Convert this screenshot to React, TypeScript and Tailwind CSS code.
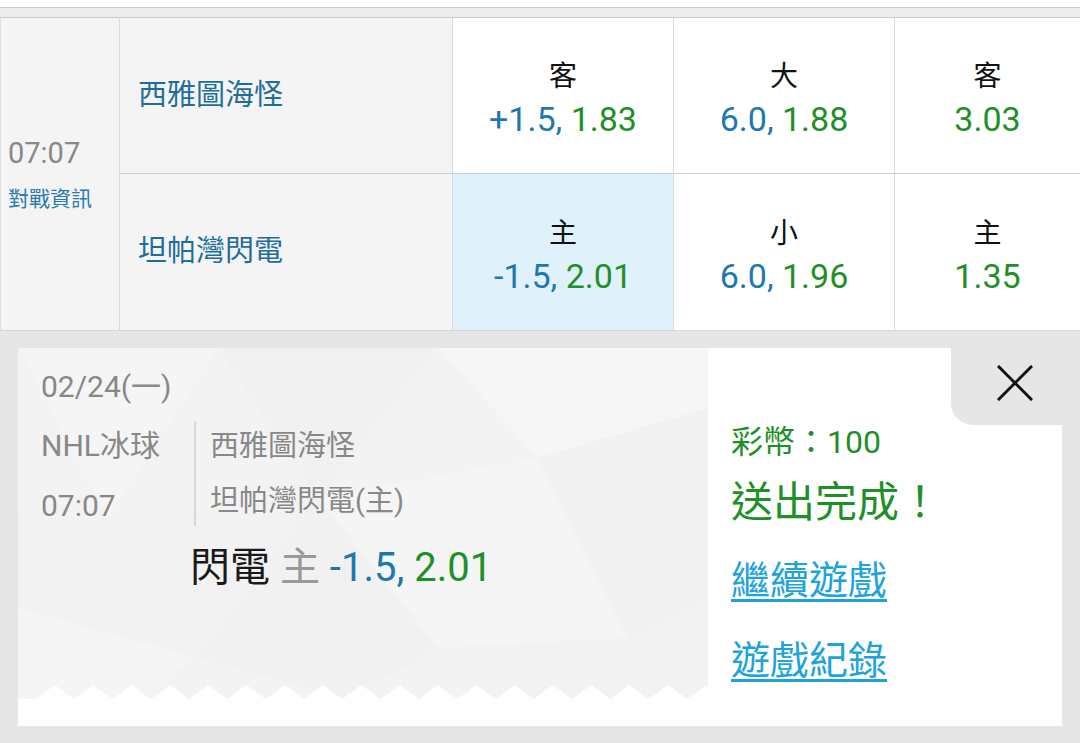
import React from "react";

const font = "font-['Roboto','Noto_Sans_CJK_TC',sans-serif]";

type Odd = { label: string; a?: string; b: string; selected?: boolean };

function OddCell({ label, a, b, selected, last }: Odd & { last?: boolean }) {
  return (
    <div
      className={
        "flex flex-col items-center justify-center pt-[7px] " +
        (last ? "flex-1 " : "w-[221px] shrink-0 border-r border-[#d5dade] ") +
        (selected ? "bg-[#dff2fb]" : "bg-white")
      }
    >
      <div className="text-[28px] leading-[36px] text-[#111]">{label}</div>
      <div className="text-[34px] leading-[40px] mt-[4px]">
        {a && <span className="text-[#1f78ad]">{a}, </span>}
        <span className="text-[#1f8f28]">{b}</span>
      </div>
    </div>
  );
}

function TeamRow({ team, odds, border }: { team: string; odds: Odd[]; border?: boolean }) {
  return (
    <div className={"flex h-[156px] " + (border ? "border-b border-[#c9d1d8]" : "h-[155px]")}>
      <div className="w-[333px] shrink-0 bg-[#f4f4f4] border-r border-[#d9dcdf] flex items-center pl-[18px] text-[29px] text-[#1d6e98]">
        {team}
      </div>
      {odds.map((o, i) => (
        <OddCell key={i} {...o} last={i === odds.length - 1} />
      ))}
    </div>
  );
}

function Pattern() {
  return (
    <svg className="absolute inset-0" width="690" height="378" viewBox="0 0 690 378">
      <rect x="0" y="0" width="690" height="378" fill="#f3f3f3" />
      <polygon points="0,0 200,0 90,170" fill="#f5f5f5" />
      <polygon points="200,0 420,0 300,150" fill="#f1f1f1" />
      <polygon points="420,0 690,0 690,60 520,110" fill="#f6f6f6" />
      <polygon points="520,110 690,60 690,250 610,290" fill="#f1f1f1" />
      <polygon points="0,170 90,170 300,150 180,310 0,260" fill="#f2f2f2" />
      <polygon points="300,150 520,110 610,290 420,300" fill="#f5f5f5" />
      <polygon points="180,310 300,150 420,300 330,351" fill="#f1f1f1" />
      <polygon points="0,260 180,310 110,351 0,351" fill="#f5f5f5" />
      <polygon points="420,300 610,290 690,250 690,351 480,351" fill="#f2f2f2" />
      <path
        d={
          "M0,351 " +
          Array.from({ length: 19 })
            .map((_, k) => {
              const p = 37 + k * 38.3;
              return `L${p - 19},351 L${p},337 L${p + 19},351`;
            })
            .join(" ") +
          " L690,351 L690,378 L0,378 Z"
        }
        fill="#ffffff"
      />
    </svg>
  );
}

export default function App() {
  return (
    <div className={"w-[1080px] h-[743px] overflow-hidden bg-white " + font}>
      <div className="h-[7px] bg-white" />
      <div className="h-[11px] bg-[#ebecee] border-y border-[#c5cbd0]" />

      <div className="flex border-b border-[#d3d7db]">
        <div className="w-[120px] shrink-0 bg-[#f4f4f4] border-l border-r border-l-[#e0e0e0] border-r-[#d9dcdf] flex flex-col justify-center pl-[7px]">
          <div className="text-[29px] leading-[34px] text-[#888]">07:07</div>
          <div className="text-[21px] leading-[28px] mt-[15px] text-[#2a7bb0]">對戰資訊</div>
        </div>
        <div className="flex-1 flex flex-col">
          <TeamRow
            border
            team="西雅圖海怪"
            odds={[
              { label: "客", a: "+1.5", b: "1.83" },
              { label: "大", a: "6.0", b: "1.88" },
              { label: "客", b: "3.03" },
            ]}
          />
          <TeamRow
            team="坦帕灣閃電"
            odds={[
              { label: "主", a: "-1.5", b: "2.01", selected: true },
              { label: "小", a: "6.0", b: "1.96" },
              { label: "主", b: "1.35" },
            ]}
          />
        </div>
      </div>

      <div className="bg-[#e6e6e6] px-[18px] pt-[17px] pb-[18px]">
        <div className="h-[378px] bg-white flex">
          <div className="relative w-[690px] shrink-0">
            <Pattern />
            <div className="relative pl-[23px] pt-[19px] text-[#888]">
              <div className="text-[30px] leading-[40px]">02/24(一)</div>
              <div className="flex mt-[14px] text-[30px]">
                <div className="w-[153px] shrink-0">
                  <div className="leading-[50px]">NHL冰球</div>
                  <div className="leading-[40px] mt-[15px]">07:07</div>
                </div>
                <div className="border-l-2 border-[#d8d8d8] pl-[14px] text-[29px]">
                  <div className="leading-[50px]">西雅圖海怪</div>
                  <div className="leading-[40px] mt-[10px]">坦帕灣閃電(主)</div>
                </div>
              </div>
              <div className="ml-[149px] mt-[17px] text-[40px] leading-[50px]">
                <span className="text-[#1a1a1a]">閃電 </span>
                <span className="text-[#999]">主 </span>
                <span className="text-[#1f78ad]">-1.5, </span>
                <span className="text-[#1f8f28]">2.01</span>
              </div>
            </div>
          </div>

          <div className="relative flex-1 pl-[23px] pt-[74px]">
            <div className="absolute top-0 right-0 w-[111px] h-[77px] bg-[#e6e6e6] rounded-bl-[22px] flex items-start justify-end pr-[29px] pt-[17px]">
              <svg width="36" height="36" viewBox="0 0 36 36">
                <path d="M1 1 L35 35 M35 1 L1 35" stroke="#111" strokeWidth="3" fill="none" />
              </svg>
            </div>
            <div className="text-[32px] leading-[40px] text-[#1f8f28]">彩幣：100</div>
            <div className="text-[42px] leading-[50px] mt-[16px] text-[#1f8f28]">送出完成！</div>
            <div className="text-[39px] leading-[50px] mt-[28px] text-[#1ea3dd] underline decoration-[3px] underline-offset-[5px]">
              繼續遊戲
            </div>
            <div className="text-[39px] leading-[50px] mt-[30px] text-[#1ea3dd] underline decoration-[3px] underline-offset-[5px]">
              遊戲紀錄
            </div>
          </div>
        </div>
      </div>
    </div>
  );
}
